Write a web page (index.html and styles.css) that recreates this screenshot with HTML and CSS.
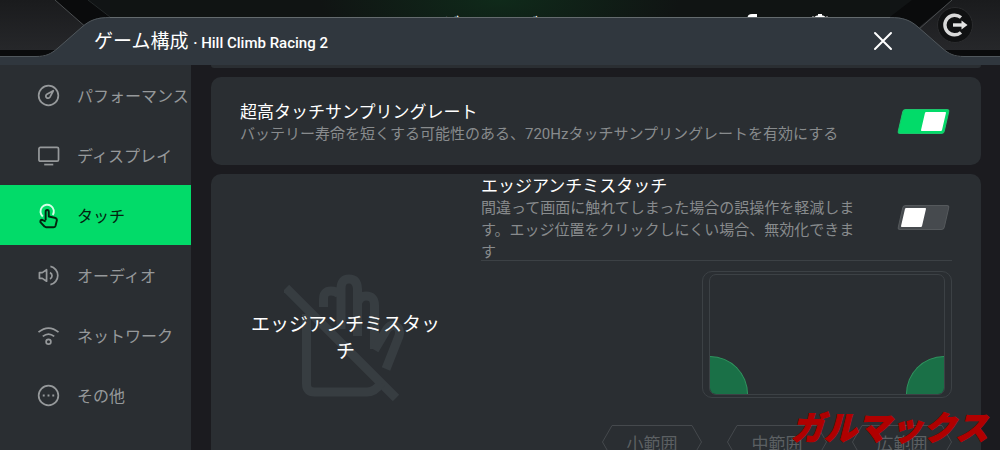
FILE: index.html
```html
<!DOCTYPE html>
<html lang="ja">
<head>
  <meta charset="UTF-8" />
  <meta name="viewport" content="width=device-width, initial-scale=1.0"/>
  <title>ゲーム構成</title>
  <link rel="stylesheet" href="styles.css">
</head>
<body>

<!-- Lobby behind the panel -->
<div class="lobby">
  <svg class="wing" viewBox="0 0 110 66">
    <path d="M0 0H110V66H0Z" fill="#0a0b0c"/>
    <path d="M88 0H110V17Z" fill="#111415"/>
    <path d="M0 0H55L96 36V50H0Z" fill="url(#metal)"/>
    <path d="M55 0L96 36" stroke="#4b4e50" fill="none"/>
    <path d="M88 0L110 17" stroke="#25292a" fill="none"/>
    <defs>
      <linearGradient id="metal" x1="0" y1="0" x2="0" y2="1">
        <stop offset="0" stop-color="#1a1b1d"/>
        <stop offset="1" stop-color="#26272a"/>
      </linearGradient>
    </defs>
  </svg>
  <div class="lobby-title">ゲームロビー</div>
  <div class="lobby-icons">
    <svg width="24" height="24" viewBox="0 0 24 24" fill="none" stroke="#fff" stroke-width="3">
      <path d="M7 8V5Q7 2.500 10 2.500H15"/>
    </svg>
    <svg width="24" height="24" viewBox="0 0 24 24" fill="none" stroke="#fff" stroke-width="2">
      <circle cx="12" cy="12" r="9"/>
      <path d="M12 1V6" stroke-width="4"/>
      <path d="M5 3V6M19 3V6" stroke="#777"/>
    </svg>
  </div>
  <svg class="wing flip" viewBox="0 0 110 66">
    <path d="M0 0H110V66H0Z" fill="#0a0b0c"/>
    <path d="M88 0H110V17Z" fill="#111415"/>
    <path d="M0 0H48L82 28V50H0Z" fill="url(#metal)"/>
    <path d="M48 0L82 30" stroke="#4b4e50" fill="none"/>
  </svg>
  <button type="button" class="exit" aria-label="終了">
    <svg width="36" height="36" viewBox="0 0 36 36" fill="none">
      <circle cx="18" cy="18" r="17.5" fill="#101112" stroke="#2b2c2e"/>
      <path d="M24 10.500A9.800 9.800 0 1 0 24 25.500" stroke="#d9d9d9" stroke-width="3.400"/>
      <path d="M16 18H26" stroke="#e4e4e4" stroke-width="3.400"/>
      <path d="M24.500 13.500L30.500 18L24.500 22.500Z" fill="#e4e4e4"/>
    </svg>
  </button>
</div>

<div class="panel">
  <header class="panel-header">
    <div class="panel-shape">
      <svg class="edge" viewBox="0 0 110 48">
        <path d="M0 40H36C46 40 51 37 58 31L82 10C90 3 97 0 110 0V48H0Z" fill="#30373e"/>
        <path d="M0 39.500H36C46 39.500 51 37 58 31L82 10C90 3 97 .5 110 .5" fill="none" stroke="#50575c"/>
      </svg>
      <div class="shape-middle"></div>
      <svg class="edge flip" viewBox="0 0 110 48">
        <path d="M0 40H36C46 40 51 37 58 31L82 10C90 3 97 0 110 0V48H0Z" fill="#30373e"/>
        <path d="M0 39.500H36C46 39.500 51 37 58 31L82 10C90 3 97 .5 110 .5" fill="none" stroke="#50575c"/>
      </svg>
    </div>
    <h1>ゲーム構成 <span>· Hill Climb Racing 2</span></h1>
    <button type="button" class="close" aria-label="閉じる">
      <svg width="24" height="24" viewBox="0 0 24 24" fill="none" stroke="#fff" stroke-width="2" stroke-linecap="round">
        <path d="M4 4L20 20M20 4L4 20"/>
      </svg>
    </button>
  </header>

  <div class="panel-body">
    <nav class="sidebar">
      <a href="#performance">
        <svg class="icon" viewBox="0 0 22 22">
          <circle cx="11" cy="11" r="10.300"/>
          <path d="M16 6L9.300 9.600A2.300 2.300 0 1 0 12.500 12.700Z"/>
        </svg>
        パフォーマンス
      </a>
      <a href="#display">
        <svg class="icon" viewBox="0 0 22 22">
          <rect x="1" y="2.500" width="20.500" height="14.500" rx="1.500"/>
          <path d="M6.500 20.500H16"/>
        </svg>
        ディスプレイ
      </a>
      <a href="#touch" class="active">
        <svg class="icon" viewBox="0 0 22 22">
          <path d="M5 12A7 7 0 1 1 15.500 10.500" stroke="#d8ffe8"/>
          <path d="M8 16V7Q8 5.200 9.600 5.200T11.300 7V12L17.500 13.300Q19.800 13.800 19.800 16L18.300 22Q17.800 23.300 16.300 23.300H8.500Q7.500 23.300 6.800 22.500L2.500 18Q2.300 15.700 4.300 15.500L8 17.300"/>
        </svg>
        タッチ
      </a>
      <a href="#audio">
        <svg class="icon" viewBox="0 0 22 22">
          <path d="M1.500 8H4.500L9 5V17L4.500 14H1.500Z"/>
          <path d="M12.500 8A3.500 3.500 0 0 1 12.500 14.500"/>
          <path d="M13 1.500A9.700 9.700 0 0 1 13 20.500"/>
        </svg>
        オーディオ
      </a>
      <a href="#network">
        <svg class="icon" viewBox="0 0 22 22">
          <path d="M.5 7.500Q11 -1 21.500 7.500M5 12Q11 7 17 12"/>
          <circle cx="11" cy="17.500" r="2.500"/>
        </svg>
        ネットワーク
      </a>
      <a href="#other">
        <svg class="icon" viewBox="0 0 22 22">
          <circle cx="11" cy="11" r="10.300"/>
          <path d="M5 11H7M10 11H12M15 11H17" stroke-width="2.200"/>
        </svg>
        その他
      </a>
    </nav>

    <main class="content">
      <div class="card card-cut"></div>

      <section class="card row">
        <div class="text">
          <label for="sampling">超高タッチサンプリングレート</label>
          <p>バッテリー寿命を短くする可能性のある、720Hzタッチサンプリングレートを有効にする</p>
        </div>
        <input type="checkbox" class="switch" id="sampling" checked>
      </section>

      <section class="card edge-card">
        <div class="edge-name">
          <svg width="124" height="132" viewBox="0 0 124 132" fill="none" stroke="#373d41" stroke-width="9">
            <path d="M2 16L112 126"/>
            <path d="M22.500 42V112Q22.500 120 30.500 120H83Q91 120 97 111"/>
            <path d="M39.500 35V27Q39.500 19 47 19Q52 19 55 22M57 57V17Q57 7 65 7T73.500 17V64M74 30Q76 24 82 24Q90.500 24 90.500 33V77"/>
            <path d="M90.500 78L103 57Q107 52 112 54Q117 57 115 64L102 97"/>
          </svg>
          <h2>エッジアンチミスタッチ</h2>
        </div>
        <div class="edge-settings">
          <div class="edge-row">
            <div class="text">
              <label for="edge">エッジアンチミスタッチ</label>
              <p>間違って画面に触れてしまった場合の誤操作を軽減します。エッジ位置をクリックしにくい場合、無効化できます</p>
            </div>
            <input type="checkbox" class="switch" id="edge">
          </div>
          <div class="phone">
            <div class="screen">
              <div class="zone zone-left"></div>
              <div class="zone zone-right"></div>
            </div>
          </div>
          <div class="ranges">
            <button type="button" disabled>
              <svg viewBox="0 0 100 34"><path d="M10 .5H90L99.500 17L90 33.500H10L.5 17Z"/></svg>
              小範囲
            </button>
            <button type="button" disabled>
              <svg viewBox="0 0 100 34"><path d="M10 .5H90L99.500 17L90 33.500H10L.5 17Z"/></svg>
              中範囲
            </button>
            <button type="button" disabled>
              <svg viewBox="0 0 100 34"><path d="M10 .5H90L99.500 17L90 33.500H10L.5 17Z"/></svg>
              広範囲
            </button>
          </div>
        </div>
      </section>
    </main>
  </div>
</div>

<div class="watermark">ガルマックス</div>

</body>
</html>
```
FILE: styles.css
```css
* {
  box-sizing: border-box;
}

body {
  margin: 0;
  height: 100vh;
  overflow: hidden;
  position: relative;
  background-color: #1b1b1f;
  color: #fff;
  font-family: Roboto, "Noto Sans CJK JP", sans-serif;
}

h1, h2, p {
  margin: 0;
  font-weight: 400;
}

button {
  padding: 0;
  border: none;
  background: none;
  font-family: inherit;
  cursor: pointer;
}

svg {
  display: block;
}

.flip {
  transform: scaleX(-1);
}

/* Lobby */
.lobby {
  position: absolute;
  top: 0;
  left: 0;
  right: 0;
  height: 66px;
  display: flex;
  justify-content: space-between;
  background: radial-gradient(ellipse 180px 60px at 50% 0, #0f2a1a, #101413);
}

.wing {
  width: 110px;
  height: 66px;
}

.lobby-title {
  position: absolute;
  top: 10px;
  left: 0;
  right: 0;
  text-align: center;
  font-size: 20px;
  line-height: 32px;
}

.lobby-icons {
  position: absolute;
  top: 13px;
  right: 168px;
  display: flex;
  gap: 42px;
}

.exit {
  position: absolute;
  top: 7px;
  right: 27px;
}

/* Panel */
.panel {
  position: relative;
  height: 100%;
  padding-top: 17px;
  display: flex;
  flex-direction: column;
  pointer-events: none;
}

.panel-header {
  position: relative;
  flex: none;
  height: 48px;
  padding: 0 105px 0 94px;
  display: flex;
  align-items: center;
  justify-content: space-between;
}

.panel-shape {
  position: absolute;
  top: 0;
  left: 0;
  right: 0;
  bottom: 0;
  display: flex;
}

.edge {
  flex: none;
  width: 110px;
  height: 48px;
}

.shape-middle {
  flex: 1;
  background-color: #30373e;
  border-top: 1px solid #646b6e;
}

.panel-header h1,
.close {
  position: relative;
}

.close,
.panel-body {
  pointer-events: auto;
}

.panel-header h1 {
  padding-top: 2px;
  font-size: 19px;
  line-height: 28px;
}

.panel-header span {
  font-size: 15px;
  font-weight: 500;
}

.panel-body {
  flex: 1;
  min-height: 0;
  display: flex;
  background-color: #1b1b1f;
}

/* Sidebar */
.sidebar {
  flex: none;
  width: 191px;
  background-color: #2a2e32;
}

.sidebar a {
  display: flex;
  align-items: center;
  gap: 18px;
  height: 60px;
  padding-left: 38px;
  color: #96999b;
  font-size: 16px;
  white-space: nowrap;
  text-decoration: none;
}

.sidebar a.active {
  background-color: #02db69;
  color: #03230f;
}

.icon {
  flex: none;
  width: 21px;
  height: 21px;
  overflow: visible;
  fill: none;
  stroke: currentColor;
  stroke-width: 1.8;
  stroke-linejoin: round;
}

.active .icon {
  stroke-width: 2;
}

/* Cards */
.content {
  flex: 1;
  min-width: 0;
  padding: 0 19px 0 20px;
  overflow: hidden;
}

.card {
  margin-bottom: 9px;
  border-radius: 10px;
  background-color: #2a2e32;
}

.card-cut {
  height: 3px;
  border-radius: 0 0 10px 10px;
}

.row {
  display: flex;
  align-items: center;
  justify-content: space-between;
  height: 88px;
  padding: 0 34px 0 29px;
}

.text {
  padding-top: 3px;
}

.text label {
  display: block;
  font-size: 17px;
  line-height: 22px;
}

.text p {
  color: #888b8d;
  font-size: 15px;
  line-height: 22px;
}

.switch {
  appearance: none;
  flex: none;
  width: 47px;
  height: 25px;
  margin: 0;
  padding: 2px;
  border: 1px solid #55595c;
  border-radius: 3px;
  background-color: #464a4e;
  transform: skewX(-13deg);
  cursor: pointer;
}

.switch::before {
  content: "";
  display: block;
  width: 21px;
  height: 19px;
  border-radius: 1px;
  background-color: #fff;
}

.switch:checked {
  border-color: #1cc56c;
  background-color: #02db69;
}

.switch:checked::before {
  margin-left: auto;
}

.edge-card {
  display: flex;
  gap: 30px;
  padding: 0 29px 42px;
}

.edge-name {
  flex: none;
  width: 211px;
  margin-bottom: -42px;
  display: grid;
  place-items: center;
}

.edge-name > * {
  grid-area: 1 / 1;
}

.edge-name h2 {
  padding: 0 10px;
  font-size: 19px;
  line-height: 27px;
  text-align: center;
}

.edge-settings {
  flex: 1;
  min-width: 0;
}

.edge-row {
  display: flex;
  align-items: center;
  justify-content: space-between;
  gap: 40px;
  height: 87px;
  padding-right: 5px;
  border-bottom: 1px solid #3c4145;
}

.phone {
  width: 250px;
  height: 127px;
  margin: 10px 0 27px auto;
  padding: 2px 6px;
  border: 1px solid #3c4145;
  border-radius: 10px;
}

.screen {
  display: flex;
  align-items: flex-end;
  justify-content: space-between;
  height: 100%;
  overflow: hidden;
  border: 1px solid #3c4145;
  border-radius: 7px;
}

.zone {
  width: 38px;
  height: 38px;
  background-color: #1a7047;
  border: 0 solid #30945f;
}

.zone-left {
  border-width: 1px 1px 0 0;
  border-top-right-radius: 38px;
}

.zone-right {
  border-width: 1px 0 0 1px;
  border-top-left-radius: 38px;
}

.ranges {
  display: flex;
  justify-content: flex-end;
  gap: 25px;
}

.ranges button {
  position: relative;
  width: 100px;
  height: 34px;
  color: #5c6063;
  font-size: 17px;
}

.ranges svg {
  position: absolute;
  top: 0;
  left: 0;
  fill: none;
  stroke: #45494d;
}

.watermark {
  position: absolute;
  right: 12px;
  bottom: 2px;
  color: #b00000;
  font-size: 33px;
  font-style: italic;
  font-weight: 900;
  line-height: 38px;
  -webkit-text-stroke: 1px #b00000;
}
```
